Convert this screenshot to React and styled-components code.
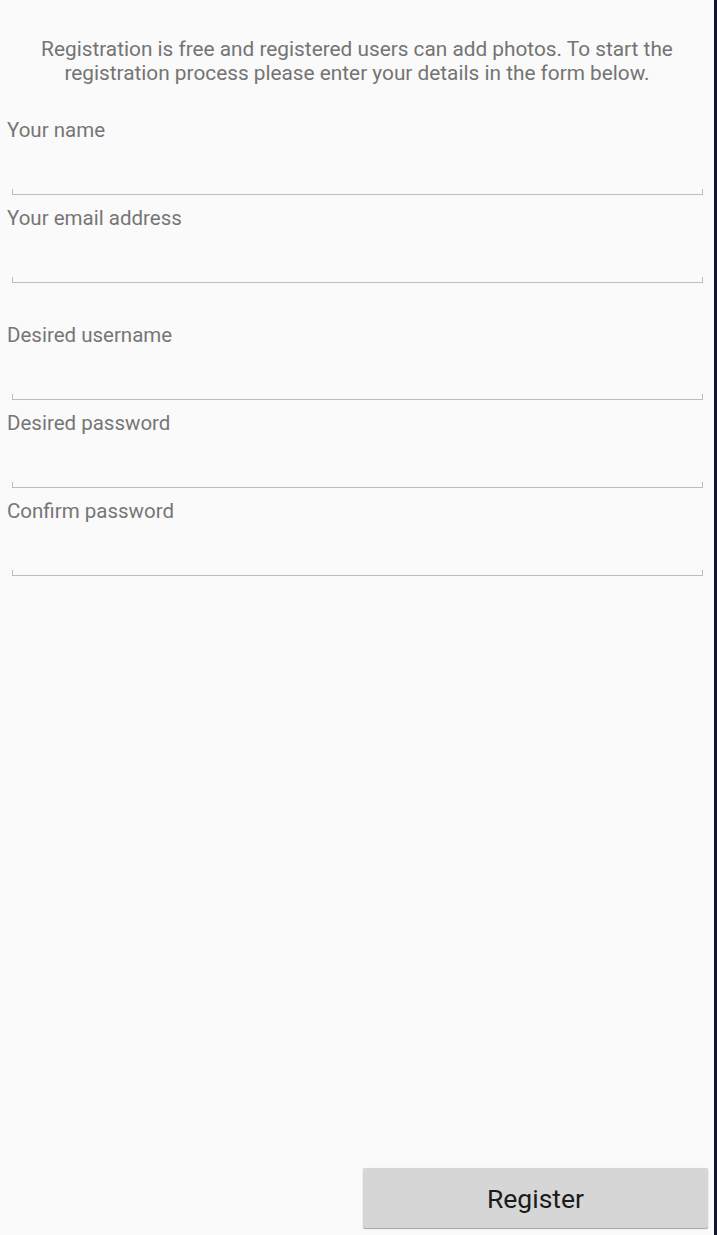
import React from "react";
import styled, { createGlobalStyle } from "styled-components";

const Global = createGlobalStyle`
  html, body { margin: 0; padding: 0; background: #fafafa; }
  body { font-family: Roboto, "Noto Sans", sans-serif; }
  * { box-sizing: border-box; }
`;

const Screen = styled.div`
  display: flex;
  width: 717px;
  height: 1235px;
  background: #fafafa;
  overflow: hidden;
`;

const Main = styled.div`
  flex: 1;
  display: flex;
  flex-direction: column;
  padding: 37px 0 7px 0;
`;

const Edge = styled.div`
  width: 3px;
  background: #14142e;
`;

const Intro = styled.p`
  margin: 0 0 33px 0;
  padding: 0 4px;
  text-align: center;
  font-size: 20.8px;
  line-height: 24px;
  color: #747474;
  white-space: nowrap;
`;

const Field = styled.div`
  display: flex;
  flex-direction: column;
  margin-bottom: ${(p) => p.$gap}px;
`;

const Label = styled.label`
  padding-left: 7px;
  font-size: 20.5px;
  line-height: 24px;
  color: #767676;
`;

const InputWrap = styled.div`
  position: relative;
  margin: 0 11px 0 12px;
  height: 53px;
  border-bottom: 1px solid #bdbdbd;
  &::before, &::after {
    content: "";
    position: absolute;
    bottom: 0;
    width: 1px;
    height: 5px;
    background: #bdbdbd;
  }
  &::before { left: 0; }
  &::after { right: 0; }
`;

const Input = styled.input`
  width: 100%;
  height: 100%;
  border: none;
  background: transparent;
  outline: none;
  font-family: inherit;
  font-size: 20px;
`;

const Spacer = styled.div`
  flex: 1;
`;

const ButtonRow = styled.div`
  display: flex;
  justify-content: flex-end;
  padding-right: 6px;
`;

const Button = styled.button`
  width: 345px;
  height: 60px;
  border: none;
  border-radius: 2px;
  background: #d6d6d6;
  box-shadow: 0 1px 1px rgba(0, 0, 0, 0.35), 0 0 1px rgba(0, 0, 0, 0.12);
  font-family: Roboto, "Noto Sans", sans-serif;
  font-size: 26.5px;
  color: #1b1b1b;
  cursor: pointer;
`;

const fields = [
  { label: "Your name", type: "text", gap: 11 },
  { label: "Your email address", type: "email", gap: 40 },
  { label: "Desired username", type: "text", gap: 11 },
  { label: "Desired password", type: "password", gap: 11 },
  { label: "Confirm password", type: "password", gap: 0 },
];

export default function App() {
  return (
    <>
      <Global />
      <Screen>
        <Main>
          <Intro>
            Registration is free and registered users can add photos. To start the
            <br />
            registration process please enter your details in the form below.
          </Intro>
          {fields.map((f) => (
            <Field key={f.label} $gap={f.gap}>
              <Label>{f.label}</Label>
              <InputWrap>
                <Input type={f.type} aria-label={f.label} />
              </InputWrap>
            </Field>
          ))}
          <Spacer />
          <ButtonRow>
            <Button>Register</Button>
          </ButtonRow>
        </Main>
        <Edge />
      </Screen>
    </>
  );
}
